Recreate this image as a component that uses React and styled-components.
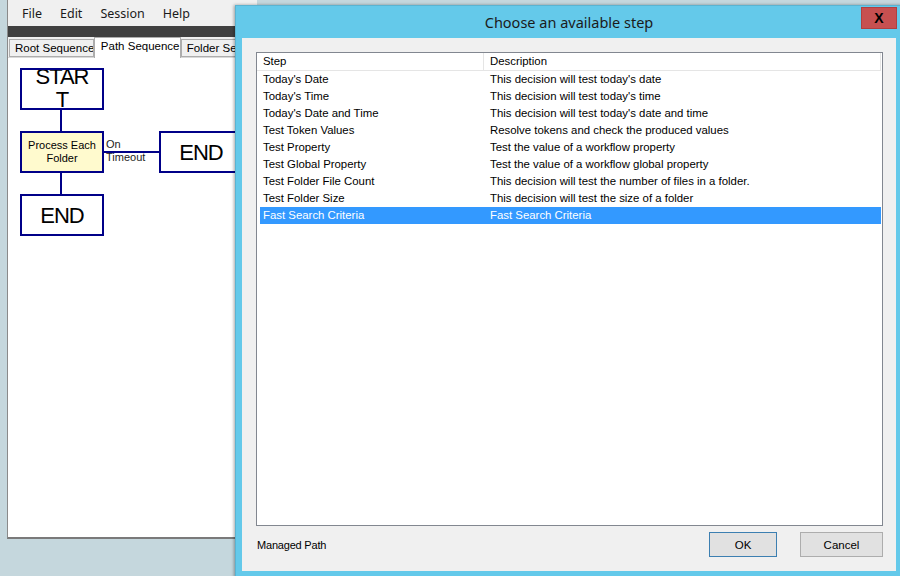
import React from "react";
import styled, { createGlobalStyle } from "styled-components";

const GlobalStyle = createGlobalStyle`
  html, body {
    margin: 0;
    padding: 0;
    background: #c5d7dd;
  }
  * {
    box-sizing: border-box;
  }
`;

const Desktop = styled.div`
  position: relative;
  width: 900px;
  height: 576px;
  overflow: hidden;
  background: #c5d7dd;
  font-family: "Liberation Sans", Arial, sans-serif;
`;

const AppWindow = styled.div`
  display: flex;
  flex-direction: column;
  width: 250px;
  height: 539px;
  margin-left: 7px;
  border-left: 1px solid #8a8a8a;
  border-bottom: 2px solid #7a7a7a;
  background: #f0f0f0;
`;

const MenuBar = styled.div`
  display: flex;
  align-items: center;
  gap: 18px;
  height: 26px;
  padding-left: 14px;
  background: #f0f0f0;
  font-family: "Noto Sans", "Open Sans", sans-serif;
  font-size: 12.5px;
  color: #1a1a1a;
`;

const DarkStrip = styled.div`
  height: 11px;
  background: #404040;
`;

const TabStrip = styled.div`
  display: flex;
  align-items: flex-end;
  height: 21px;
  padding-left: 1px;
  background: #f0f0f0;
  border-bottom: 1px solid #d9d9d9;
`;

const Tab = styled.div`
  height: ${(p) => (p.$active ? "21px" : "18px")};
  width: ${(p) => p.$width}px;
  padding: ${(p) => (p.$active ? "2px 0 0 6px" : "2px 0 0 5px")};
  margin-bottom: ${(p) => (p.$active ? "-1px" : "0")};
  background: ${(p) => (p.$active ? "#ffffff" : "#f0f0f0")};
  border: 1px solid #adadad;
  border-bottom: ${(p) => (p.$active ? "none" : "1px solid #adadad")};
  font-size: 11.5px;
  color: #000;
  white-space: nowrap;
  overflow: hidden;
`;

const Canvas = styled.div`
  position: relative;
  flex: 1;
  background: #ffffff;
  overflow: hidden;
`;

const Wires = styled.svg`
  position: absolute;
  left: 0;
  top: 0;
`;

const Node = styled.div`
  position: absolute;
  left: ${(p) => p.$x}px;
  top: ${(p) => p.$y}px;
  width: ${(p) => p.$w}px;
  height: ${(p) => p.$h}px;
  display: flex;
  align-items: center;
  justify-content: center;
  border: 2px solid #000088;
  background: ${(p) => (p.$decision ? "#ffface" : "#ffffff")};
  overflow: hidden;
  text-align: center;
  color: #000;
  font-size: ${(p) => (p.$decision ? "11px" : "22px")};
  letter-spacing: ${(p) => (p.$decision ? "0" : "-1px")};
  line-height: ${(p) => (p.$decision ? "13px" : "23px")};
`;

const NodeLabel = styled.div`
  margin-top: ${(p) => p.$shift || 0}px;
`;

const WireLabel = styled.div`
  position: absolute;
  left: ${(p) => p.$x}px;
  top: ${(p) => p.$y}px;
  font-size: 11px;
  line-height: 13px;
  color: #222;
`;

const Dialog = styled.div`
  position: absolute;
  left: 235px;
  top: 5px;
  width: 668px;
  height: 573px;
  display: flex;
  flex-direction: column;
  background: #64c9ea;
  border: 1px solid #5ab3d1;
  box-shadow: -1px 0 3px rgba(0, 0, 0, 0.35);
`;

const TitleBar = styled.div`
  position: relative;
  height: 32px;
  display: flex;
  align-items: center;
  justify-content: center;
  font-family: "Noto Sans", "Open Sans", sans-serif;
  font-size: 14.5px;
  color: #1b1b1b;
`;

const CloseButton = styled.div`
  position: absolute;
  right: 5px;
  top: 1px;
  width: 36px;
  height: 22px;
  display: flex;
  align-items: center;
  justify-content: center;
  background: #c75050;
  border: 1px solid #b04040;
  font-family: "Liberation Sans", Arial, sans-serif;
  font-weight: bold;
  font-size: 14px;
  color: #000;
`;

const Body = styled.div`
  flex: 1;
  display: flex;
  flex-direction: column;
  margin: 0 6px 6px;
  padding: 14px 13px 0 14px;
  background: #f0f0f0;
`;

const ListBox = styled.div`
  flex: 1;
  background: #ffffff;
  border: 1px solid #828790;
  font-size: 11.4px;
  color: #000;
`;

const HeaderRow = styled.div`
  display: flex;
  height: 18px;
  line-height: 17px;
  border-bottom: 1px solid #e5e5e5;
  margin-right: 1px;
`;

const HeaderCell = styled.div`
  width: ${(p) => (p.$w ? `${p.$w}px` : "auto")};
  flex: ${(p) => (p.$w ? "none" : 1)};
  padding-left: 6px;
  border-right: 1px solid #e5e5e5;
`;

const Row = styled.div`
  display: flex;
  height: 17px;
  line-height: 17px;
  margin: 0 1px 0 3px;
  background: ${(p) => (p.$selected ? "#3399ff" : "transparent")};
  color: ${(p) => (p.$selected ? "#ffffff" : "#000000")};
`;

const Cell = styled.div`
  width: ${(p) => (p.$w ? `${p.$w}px` : "auto")};
  flex: ${(p) => (p.$w ? "none" : 1)};
  padding-left: ${(p) => p.$pad}px;
  white-space: nowrap;
`;

const Footer = styled.div`
  display: flex;
  align-items: center;
  padding: 6px 0 14px;
  font-size: 11px;
  color: #000;
`;

const FooterLabel = styled.div`
  flex: 1;
  padding-left: 1px;
  letter-spacing: -0.2px;
`;

const Button = styled.div`
  width: ${(p) => p.$w}px;
  height: 25px;
  margin-left: ${(p) => p.$gap || 0}px;
  display: flex;
  align-items: center;
  justify-content: center;
  background: #e1e1e1;
  border: 1px solid ${(p) => (p.$default ? "#3c7fb1" : "#adadad")};
  font-size: 11.5px;
  color: #000;
`;

const steps = [
  ["Today's Date", "This decision will test today's date"],
  ["Today's Time", "This decision will test today's time"],
  ["Today's Date and Time", "This decision will test today's date and time"],
  ["Test Token Values", "Resolve tokens and check the produced values"],
  ["Test Property", "Test the value of a workflow property"],
  ["Test Global Property", "Test the value of a workflow global property"],
  ["Test Folder File Count", "This decision will test the number of files in a folder."],
  ["Test Folder Size", "This decision will test the size of a folder"],
  ["Fast Search Criteria", "Fast Search Criteria"],
];

export default function App() {
  return (
    <>
      <GlobalStyle />
      <Desktop>
        <AppWindow>
          <MenuBar>
            <span>File</span>
            <span>Edit</span>
            <span>Session</span>
            <span>Help</span>
          </MenuBar>
          <DarkStrip />
          <TabStrip>
            <Tab $width={89}>Root Sequence</Tab>
            <Tab $active $width={91}>Path Sequence</Tab>
            <Tab $width={80}>Folder Sequence</Tab>
          </TabStrip>
          <Canvas>
            <Wires width="250" height="200">
              <line x1="53" y1="52" x2="53" y2="73" stroke="#000088" strokeWidth="2" />
              <line x1="53" y1="114" x2="53" y2="136" stroke="#000088" strokeWidth="2" />
              <line x1="95" y1="94" x2="151" y2="94" stroke="#000088" strokeWidth="2" />
            </Wires>
            <Node $x={12} $y={10} $w={84} $h={42}>
              <NodeLabel $shift={-2}>
                STAR
                <br />T
              </NodeLabel>
            </Node>
            <Node $decision $x={12} $y={73} $w={84} $h={42}>
              <NodeLabel>
                Process Each
                <br />
                Folder
              </NodeLabel>
            </Node>
            <WireLabel $x={98} $y={80}>
              On
              <br />
              Timeout
            </WireLabel>
            <Node $x={151} $y={73} $w={84} $h={42}>
              <NodeLabel>END</NodeLabel>
            </Node>
            <Node $x={12} $y={136} $w={84} $h={42}>
              <NodeLabel>END</NodeLabel>
            </Node>
          </Canvas>
        </AppWindow>

        <Dialog>
          <TitleBar>
            Choose an available step
            <CloseButton>X</CloseButton>
          </TitleBar>
          <Body>
            <ListBox>
              <HeaderRow>
                <HeaderCell $w={227}>Step</HeaderCell>
                <HeaderCell>Description</HeaderCell>
              </HeaderRow>
              {steps.map(([name, desc], i) => (
                <Row key={name} $selected={i === steps.length - 1}>
                  <Cell $w={224} $pad={3}>
                    {name}
                  </Cell>
                  <Cell $pad={6}>{desc}</Cell>
                </Row>
              ))}
            </ListBox>
            <Footer>
              <FooterLabel>Managed Path</FooterLabel>
              <Button $default $w={68}>
                OK
              </Button>
              <Button $w={83} $gap={23}>
                Cancel
              </Button>
            </Footer>
          </Body>
        </Dialog>
      </Desktop>
    </>
  );
}
